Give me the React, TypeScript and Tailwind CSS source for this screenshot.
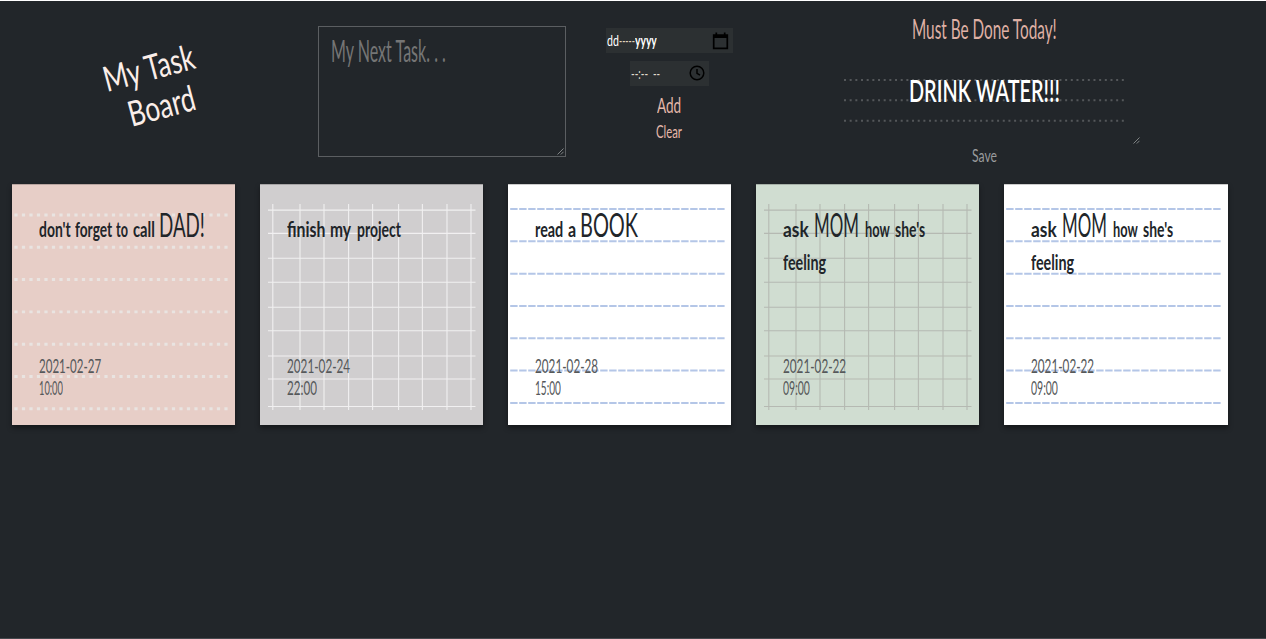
import { useLayoutEffect, useRef, useState } from "react";

type InkProps = { text: string; width: number; gap?: number; className?: string };

/* Narrow hand-lettered word: squeezed horizontally to its given width. */
function Ink({ text, width, gap = 0, className = "" }: InkProps) {
  const ref = useRef<HTMLSpanElement>(null);
  const [scale, setScale] = useState(1);
  useLayoutEffect(() => {
    if (ref.current) setScale(width / ref.current.offsetWidth);
  }, [width, text]);
  return (
    <span className="inline-block whitespace-pre align-baseline" style={{ width, marginLeft: gap }}>
      <span ref={ref} className={`inline-block origin-left ${className}`} style={{ transform: `scaleX(${scale})` }}>
        {text}
      </span>
    </span>
  );
}

type Word = { t: string; w: number; gap?: number; big?: boolean };
type Note = { paper: "dots" | "grid" | "dashes"; bg: string; line: string; rows: Word[][]; date: string; dateW: number; time: string; timeW: number };

const mom: Word[][] = [
  [
    { t: "ask", w: 26 },
    { t: "MOM", w: 45, gap: 5, big: true },
    { t: "how", w: 25, gap: 6 },
    { t: "she's", w: 30, gap: 5 },
  ],
  [{ t: "feeling", w: 43 }],
];

const notes: Note[] = [
  {
    paper: "dots", bg: "bg-[#e7cec7]", line: "#e9e4e1",
    rows: [[
      { t: "don't", w: 32 },
      { t: "forget", w: 37, gap: 4 },
      { t: "to", w: 12, gap: 4 },
      { t: "call", w: 22, gap: 5 },
      { t: "DAD!", w: 46, gap: 4, big: true },
    ]],
    date: "2021-02-27", dateW: 62, time: "10:00", timeW: 24,
  },
  {
    paper: "grid", bg: "bg-[#d0cecf]", line: "#f1f0f1",
    rows: [[{ t: "finish", w: 38 }, { t: "my", w: 21, gap: 5 }, { t: "project", w: 44, gap: 6 }]],
    date: "2021-02-24", dateW: 63, time: "22:00", timeW: 30,
  },
  {
    paper: "dashes", bg: "bg-white", line: "#b4c6e7",
    rows: [[{ t: "read", w: 28 }, { t: "a", w: 8, gap: 5 }, { t: "BOOK", w: 58, gap: 4, big: true }]],
    date: "2021-02-28", dateW: 63, time: "15:00", timeW: 26,
  },
  { paper: "grid", bg: "bg-[#d0ddd1]", line: "#b5b9b2", rows: mom, date: "2021-02-22", dateW: 63, time: "09:00", timeW: 27 },
  { paper: "dashes", bg: "bg-white", line: "#b4c6e7", rows: mom, date: "2021-02-22", dateW: 63, time: "09:00", timeW: 27 },
];

const ruled = [0, 1, 2, 3, 4, 5, 6];
const gridX = [12.8, 40, 64, 88.6, 112.6, 138.6, 162.4, 187, 211];
const gridY = [24.8, 48.2, 73.2, 97.2, 122.4, 146, 171.3, 194.4, 222];

function Paper({ kind, color }: { kind: Note["paper"]; color: string }) {
  return (
    <svg className="absolute inset-0 h-full w-full" viewBox="0 0 223.4 241" preserveAspectRatio="none" stroke={color} fill="none">
      {kind === "dots" &&
        ruled.map((i) => (
          <line key={i} x1={2.4} x2={216} y1={30.2 + i * 32.4} y2={30.2 + i * 32.4} strokeWidth={3} strokeDasharray="3.2 4.3" />
        ))}
      {kind === "dashes" &&
        ruled.map((i) => (
          <line key={i} x1={2.2} x2={217} y1={24.1 + i * 32.45} y2={24.1 + i * 32.45} strokeWidth={2} strokeDasharray="7.4 1.6" />
        ))}
      {kind === "grid" && (
        <>
          {gridX.map((x) => <line key={x} x1={x} x2={x} y1={19} y2={226} strokeWidth={1.1} />)}
          {gridY.map((y) => <line key={y} x1={8} x2={215.5} y1={y + 0.4} y2={y + 0.4} strokeWidth={1.1} />)}
        </>
      )}
    </svg>
  );
}

function NoteCard({ note }: { note: Note }) {
  return (
    <article className={`relative h-[241px] w-[223.4px] shrink-0 border-t border-t-black/20 shadow-[0_3px_5px_rgba(0,0,0,0.4)] ${note.bg}`}>
      <Paper kind={note.paper} color={note.line} />
      <div className="relative flex h-full flex-col justify-between pt-[28px] pb-[27px] pl-[27px]">
        <div>
          {note.rows.map((row, i) => (
            <p key={i} className="flex h-[32.5px] items-baseline whitespace-nowrap text-[#212529]">
              <span className="inline-block h-[24px] w-0" />
              {row.map((word) => (
                <Ink
                  key={word.t}
                  text={word.t}
                  width={word.w}
                  gap={word.gap}
                  className={word.big ? "text-[33px] leading-[10px] font-normal" : "text-[20px] leading-[20px] font-bold"}
                />
              ))}
            </p>
          ))}
        </div>
        <div className="text-[19px] leading-[21.5px] text-[#55585a]">
          <p className="h-[21.5px]"><Ink text={note.date} width={note.dateW} /></p>
          <p className="h-[21.5px]"><Ink text={note.time} width={note.timeW} /></p>
        </div>
      </div>
    </article>
  );
}

function Grip({ className }: { className: string }) {
  return (
    <svg className={`absolute ${className}`} width="7" height="7" viewBox="0 0 7 7" stroke="#8a8d8f" strokeWidth="0.9">
      <path d="M0.5 6.5 6.5 0.5M3.8 6.5 6.5 3.8" />
    </svg>
  );
}

export default function App() {
  return (
    <main className="flex h-[639px] w-[1266px] flex-col overflow-hidden border-t border-b border-t-white border-b-[#45484d] bg-[#22262a] font-['Lato','Open_Sans',sans-serif]">
      <header className="flex h-[183px] shrink-0">
        <div className="flex w-[318px] justify-center pt-[45px]">
          <h1 className="flex h-[80px] w-[100px] origin-center -translate-x-[6px] -rotate-[15deg] flex-col items-center text-[35px] leading-[40px] text-[#fbeee9]">
            <Ink text="My Task" width={93} />
            <Ink text="Board" width={68} gap={6} />
          </h1>
        </div>

        <div className="relative mt-[25px] h-[131px] w-[248px] border border-[#5b5e61] pt-[5px] pl-[12px] text-[31px] leading-[37px] text-[#757575]">
          <Ink text="My Next Task. . ." width={115} />
          <Grip className="right-[1px] bottom-[1px]" />
        </div>

        <div className="flex w-[206px] flex-col items-center pt-[27px]">
          <div className="flex h-[25px] w-[127px] items-center justify-between bg-[#2c3032] pr-[4px] pl-[1px] text-[15px] leading-[23px] text-white">
            <span className="flex">
              <Ink text="dd" width={12} />
              <Ink text="-----" width={16} className="text-[#e0d5bd]" />
              <Ink text="yyyy" width={22} className="font-bold" />
            </span>
            <svg width="17" height="18" viewBox="0 0 17 18" fill="none" stroke="black" strokeWidth="1.7">
              <path d="M1.7 3h13.6v13.4H1.7z" />
              <path d="M1 4.5h15" strokeWidth="3" />
              <path d="M4.3 0.5v3M12.7 0.5v3" />
            </svg>
          </div>
          <div className="mt-[8px] flex h-[24.5px] w-[79px] items-center justify-between bg-[#2c3032] pr-[4px] pl-[1px] text-[15px] leading-[20px] text-[#e0dccf]">
            <span className="flex">
              <Ink text="--:--" width={17} />
              <Ink text="--" width={7} gap={5} />
            </span>
            <svg width="16" height="16" viewBox="0 0 16 16" fill="none" stroke="black" strokeWidth="1.5">
              <circle cx="8" cy="8" r="6.8" />
              <path d="M8 4v4.3l3 1.9" />
            </svg>
          </div>
          <button className="mt-[6.5px] h-[26px] text-[22px] leading-[26px] text-[#e6b8aa]"><Ink text="Add" width={24} /></button>
          <button className="mt-[3px] h-[22px] text-[17px] leading-[22px] text-[#e6b8aa]"><Ink text="Clear" width={26} /></button>
        </div>

        <div className="flex w-[425px] flex-col items-center pt-[11px]">
          <h2 className="h-[34px] text-[26px] leading-[34px] text-[#dfb0a4]">
            <Ink text="Must Be Done Today!" width={145} />
          </h2>
          <div className="relative mt-[20px] h-[78px] w-[311px] text-center text-[31px] leading-[48px] text-white">
            <svg className="absolute top-[12px] left-[15px]" width="284" height="46" viewBox="0 0 284 46" stroke="#54575a" strokeWidth="2" strokeDasharray="2 3.67">
              <path d="M0 2h282" />
              <path d="M0 22.2h282" />
              <path d="M0 42.8h282" />
            </svg>
            <span className="relative"><Ink text="DRINK WATER!!!" width={151} className="font-semibold" /></span>
            <Grip className="right-0 bottom-0" />
          </div>
          <button className="h-[22px] text-[18px] leading-[20px] text-[#999b9c]"><Ink text="Save" width={25} /></button>
        </div>
      </header>

      <section className="flex gap-[24.75px] pl-[11.6px]">
        {notes.map((note, i) => <NoteCard key={i} note={note} />)}
      </section>
    </main>
  );
}
